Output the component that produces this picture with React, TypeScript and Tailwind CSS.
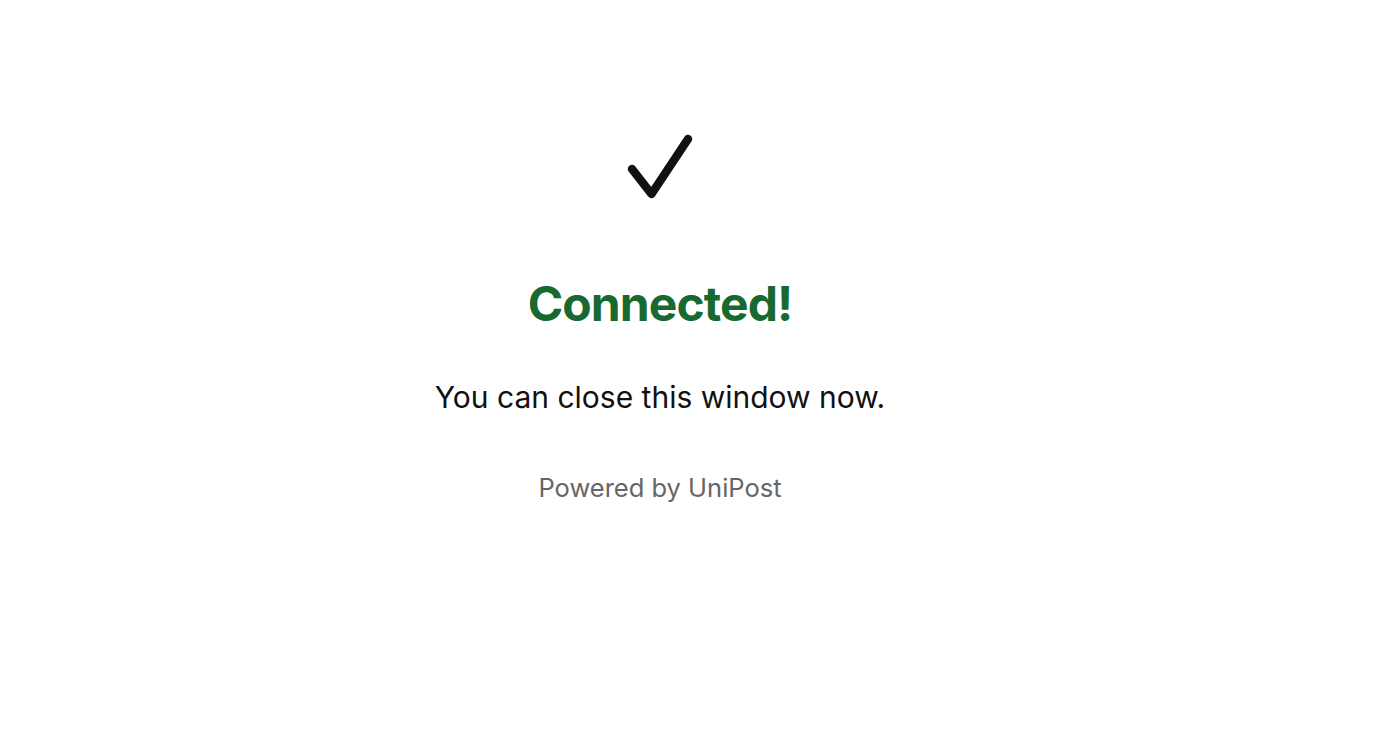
export default function App() {
  return (
    <div className="min-h-screen w-full bg-white pr-[72px] font-['Inter','Noto_Sans',sans-serif]">
      <div className="flex flex-col items-center pt-[131px] text-center">
        {/* Check mark */}
        <svg width="72" height="72" viewBox="0 0 72 72" className="block">
          <path
            d="M8 38 L27.5 63 L64 8"
            fill="none"
            stroke="#111111"
            strokeWidth="8.5"
            strokeLinecap="round"
            strokeLinejoin="round"
          />
        </svg>

        <h1 className="mt-[77px] text-[48px] leading-none font-bold tracking-[-0.9px] text-[#17692f]">
          Connected!
        </h1>

        <p className="mt-[54px] text-[30px] leading-none text-[#111111]">
          You can close this window now.
        </p>

        <p className="mt-[63px] text-[25.5px] leading-none text-[#666666]">
          Powered by UniPost
        </p>
      </div>
    </div>
  );
}
